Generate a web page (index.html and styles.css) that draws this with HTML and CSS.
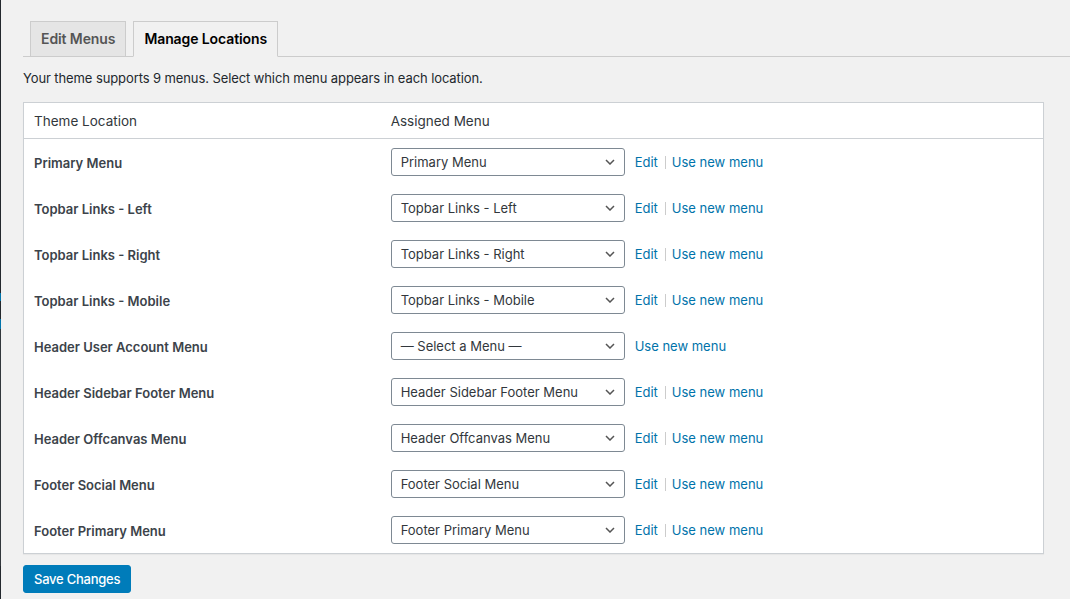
FILE: index.html
```html
<!DOCTYPE html>
<html lang="en">
<head>
<meta charset="utf-8">
<title>Menus - Manage Locations</title>
<link rel="stylesheet" href="styles.css">
</head>
<body>
<div class="page">
  <div class="admin-edge"></div>
  <main class="wrap">
    <nav class="nav-tabs">
      <a class="nav-tab">Edit Menus</a>
      <a class="nav-tab nav-tab-active">Manage Locations</a>
    </nav>
    <div class="content">
      <p class="intro">Your theme supports 9 menus. Select which menu appears in each location.</p>
      <table class="locations">
        <thead>
          <tr><th class="col-title">Theme Location</th><th class="col-menu">Assigned Menu</th></tr>
        </thead>
        <tbody>
          <tr><td class="loc-name">Primary Menu</td><td><div class="cell"><div class="select"><span>Primary Menu</span><svg class="chev" width="10" height="6" viewBox="0 0 10 6"><path d="M1 1l4 4 4-4" fill="none" stroke="#555" stroke-width="1.5"/></svg></div><div class="links"><a class="edit">Edit</a><a class="add">Use new menu</a></div></div></td></tr>
          <tr><td class="loc-name">Topbar Links - Left</td><td><div class="cell"><div class="select"><span>Topbar Links - Left</span><svg class="chev" width="10" height="6" viewBox="0 0 10 6"><path d="M1 1l4 4 4-4" fill="none" stroke="#555" stroke-width="1.5"/></svg></div><div class="links"><a class="edit">Edit</a><a class="add">Use new menu</a></div></div></td></tr>
          <tr><td class="loc-name">Topbar Links - Right</td><td><div class="cell"><div class="select"><span>Topbar Links - Right</span><svg class="chev" width="10" height="6" viewBox="0 0 10 6"><path d="M1 1l4 4 4-4" fill="none" stroke="#555" stroke-width="1.5"/></svg></div><div class="links"><a class="edit">Edit</a><a class="add">Use new menu</a></div></div></td></tr>
          <tr><td class="loc-name">Topbar Links - Mobile</td><td><div class="cell"><div class="select"><span>Topbar Links - Mobile</span><svg class="chev" width="10" height="6" viewBox="0 0 10 6"><path d="M1 1l4 4 4-4" fill="none" stroke="#555" stroke-width="1.5"/></svg></div><div class="links"><a class="edit">Edit</a><a class="add">Use new menu</a></div></div></td></tr>
          <tr><td class="loc-name">Header User Account Menu</td><td><div class="cell"><div class="select"><span>— Select a Menu —</span><svg class="chev" width="10" height="6" viewBox="0 0 10 6"><path d="M1 1l4 4 4-4" fill="none" stroke="#555" stroke-width="1.5"/></svg></div><div class="links"><a class="add solo">Use new menu</a></div></div></td></tr>
          <tr><td class="loc-name">Header Sidebar Footer Menu</td><td><div class="cell"><div class="select"><span>Header Sidebar Footer Menu</span><svg class="chev" width="10" height="6" viewBox="0 0 10 6"><path d="M1 1l4 4 4-4" fill="none" stroke="#555" stroke-width="1.5"/></svg></div><div class="links"><a class="edit">Edit</a><a class="add">Use new menu</a></div></div></td></tr>
          <tr><td class="loc-name">Header Offcanvas Menu</td><td><div class="cell"><div class="select"><span>Header Offcanvas Menu</span><svg class="chev" width="10" height="6" viewBox="0 0 10 6"><path d="M1 1l4 4 4-4" fill="none" stroke="#555" stroke-width="1.5"/></svg></div><div class="links"><a class="edit">Edit</a><a class="add">Use new menu</a></div></div></td></tr>
          <tr><td class="loc-name">Footer Social Menu</td><td><div class="cell"><div class="select"><span>Footer Social Menu</span><svg class="chev" width="10" height="6" viewBox="0 0 10 6"><path d="M1 1l4 4 4-4" fill="none" stroke="#555" stroke-width="1.5"/></svg></div><div class="links"><a class="edit">Edit</a><a class="add">Use new menu</a></div></div></td></tr>
          <tr><td class="loc-name">Footer Primary Menu</td><td><div class="cell"><div class="select"><span>Footer Primary Menu</span><svg class="chev" width="10" height="6" viewBox="0 0 10 6"><path d="M1 1l4 4 4-4" fill="none" stroke="#555" stroke-width="1.5"/></svg></div><div class="links"><a class="edit">Edit</a><a class="add">Use new menu</a></div></div></td></tr>
        </tbody>
      </table>
      <button class="btn-primary" type="button">Save Changes</button>
    </div>
  </main>
</div>
</body>
</html>
```

FILE: styles.css
```css
html, body {
  margin: 0;
  padding: 0;
  background: #f1f1f1;
}
body {
  font-family: Inter, "Noto Sans", Roboto, sans-serif;
  color: #23282d;
  width: 1070px;
  height: 599px;
  overflow: hidden;
}
.page {
  display: flex;
  height: 599px;
}
.admin-edge {
  width: 1px;
  flex: 0 0 1px;
  background: linear-gradient(to bottom,
    #23282d 0, #23282d 293px,
    #0073aa 293px, #0073aa 301px,
    #23282d 301px, #23282d 319px,
    #0073aa 319px, #0073aa 329px,
    #32373c 329px, #32373c 566px,
    #23282d 566px);
}
.wrap {
  flex: 1;
  padding-left: 22px;
}
.nav-tabs {
  display: flex;
  gap: 7px;
  padding: 21px 0 0 7px;
  border-bottom: 1px solid #ccc;
}
.nav-tab {
  display: block;
  padding: 5px 10px;
  line-height: 24px;
  font-size: 14px;
  font-weight: 600;
  color: #555;
  background: #e5e5e5;
  border: 1px solid #ccc;
  margin-bottom: -1px;
  letter-spacing: -0.1px;
}
.nav-tab-active {
  color: #000;
  background: #f1f1f1;
  border-bottom-color: #f1f1f1;
}
.content {
  margin-right: 26px;
}
.intro {
  margin: 11px 0 14px;
  font-size: 13px;
  line-height: 20px;
  color: #23282d;
  letter-spacing: -0.1px;
}
.locations {
  width: 100%;
  border-collapse: separate;
  border-spacing: 0;
  background: #fff;
  border: 1px solid #ccd0d4;
  box-shadow: 0 1px 1px rgba(0,0,0,.04);
}
.locations th {
  text-align: left;
  font-weight: 400;
  font-size: 13.5px;
  line-height: 19px;
  padding: 9px 10px 7px;
  color: #32373c;
  border-bottom: 1px solid #ccd0d4;
}
.col-title {
  width: 35%;
}
.locations td {
  padding: 9px 10px;
  vertical-align: middle;
}
.loc-name {
  font-size: 13px;
  font-weight: 600;
  color: #3c434a;
  padding-top: 10px !important;
  padding-bottom: 8px !important;
}
.cell {
  display: flex;
  align-items: center;
}
.select {
  box-sizing: border-box;
  width: 234px;
  height: 28px;
  border: 1px solid #7e8993;
  border-radius: 3px;
  padding: 0 9px 0 9px;
  display: flex;
  align-items: center;
  justify-content: space-between;
  font-size: 13px;
  color: #32373c;
}
.chev {
  display: block;
}
.links {
  display: flex;
  align-items: center;
  margin-left: 10px;
  font-size: 13px;
}
.links a {
  color: #0073aa;
  line-height: 18px;
}
.edit {
  padding-right: 7px;
  border-right: 1px solid #ccc;
  line-height: 13px !important;
}
.add {
  margin-left: 6px;
}
.add.solo {
  margin-left: 0;
}
.btn-primary {
  display: block;
  margin-top: 11px;
  height: 28px;
  padding: 0 10px;
  background: #007cba;
  border: 1px solid #007cba;
  border-radius: 3px;
  color: #fff;
  font-family: Inter, "Noto Sans", Roboto, sans-serif;
  font-size: 13px;
  font-weight: 500;
  letter-spacing: -0.25px;
  cursor: pointer;
}
```
